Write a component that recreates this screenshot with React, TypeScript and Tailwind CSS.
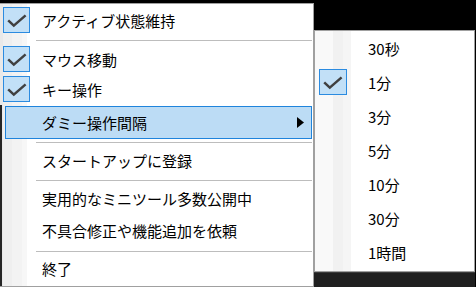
import React from 'react'

const font = { fontFamily: '"Noto Sans CJK JP", "Noto Sans", sans-serif' }

function Check({ wide = false }: { wide?: boolean }) {
  return (
    <div
      className={`${wide ? 'w-[28px]' : 'w-[27px]'} h-[26px] shrink-0 bg-[#c2e0f7] border border-[#2b8be0] flex items-center justify-center`}
    >
      <svg width="20" height="14" viewBox="0 0 20 14" className="mt-[1px]">
        <path d="M1.2 6.3 L6.8 11.6 L18.6 1.4" fill="none" stroke="#404040" strokeWidth="2.5" strokeLinejoin="miter" />
      </svg>
    </div>
  )
}

function MainItem({ label, checked, h }: { label: string; checked?: boolean; h: string }) {
  return (
    <div className={`flex items-center pl-[3px] ${h}`}>
      {checked ? <Check /> : <div className="w-[27px] shrink-0" />}
      <span className="ml-[12px] text-[15px] leading-none text-black whitespace-nowrap">{label}</span>
    </div>
  )
}

function Separator({ h, top }: { h: string; top: string }) {
  return (
    <div className={`${h} ${top} pl-[36px] pr-[1px]`}>
      <div className="h-px bg-[#bdbdbd]" />
    </div>
  )
}

const subItems = ['30秒', '1分', '3分', '5分', '10分', '30分', '1時間']

export default function App() {
  return (
    <div className="w-[476px] h-[287px] bg-black flex items-start overflow-hidden select-none" style={font}>
      {/* main menu */}
      <div className="relative mt-[3px] w-[314px] h-[284px] shrink-0 border-t border-r border-b border-[#a0a0a0] bg-[linear-gradient(to_right,#e9e9e9_0px,#e9e9e9_3px,#efefef_3px,#efefef_12px,#f3f3f3_12px,#f3f3f3_22px,#f7f7f7_22px,#f7f7f7_27px,#ffffff_27px)] flex flex-col">
        <div className="absolute left-0 top-[101px] bottom-0 w-[2px] bg-[#262626]" />
        <MainItem label="アクティブ状態維持" checked h="h-[32px]" />
        <Separator h="h-[8px]" top="pt-[4px]" />
        <MainItem label="マウス移動" checked h="h-[30px]" />
        <MainItem label="キー操作" checked h="h-[30px]" />
        <div className="h-[2px]" />
        <div className="h-[33px] ml-[5px] mr-[1px] bg-[#bcdcf5] border border-[#1f84dc] flex items-center pl-[36px] pr-[7px]">
          <span className="text-[15px] leading-none text-black whitespace-nowrap">ダミー操作間隔</span>
          <svg width="7" height="11" viewBox="0 0 7 11" className="ml-auto">
            <path d="M0 0 L7 5.5 L0 11 Z" fill="#000" />
          </svg>
        </div>
        <Separator h="h-[6px]" top="pt-[3px]" />
        <MainItem label="スタートアップに登録" h="h-[31px]" />
        <Separator h="h-[6px]" top="pt-[4px]" />
        <MainItem label="実用的なミニツール多数公開中" h="h-[32px]" />
        <MainItem label="不具合修正や機能追加を依頼" h="h-[32px]" />
        <Separator h="h-[8px]" top="pt-[5px]" />
        <MainItem label="終了" h="h-[28px]" />
      </div>

      {/* right column: submenu */}
      <div className="w-[162px] h-[287px] shrink-0 flex flex-col">
        <div className="h-[30px] bg-black" />
        <div className="w-[161px] h-[242px] border border-[#a0a0a0] bg-[linear-gradient(to_right,#f9f9f9_0px,#f9f9f9_18px,#f1f1f1_18px,#f1f1f1_28px,#f5f5f5_28px,#f5f5f5_36px,#ffffff_36px)] flex flex-col">
          {subItems.map((s) => (
            <div key={s} className="h-[34px] flex items-center pl-[4px]">
              {s === '1分' ? <Check wide /> : <div className="w-[28px] shrink-0" />}
              <span className="ml-[21px] text-[15px] leading-none text-black whitespace-nowrap">{s}</span>
            </div>
          ))}
        </div>
        <div className="flex-1 bg-[#1f1f1f] border-t border-[#3a3a3a] mr-[1px]" />
      </div>
    </div>
  )
}
